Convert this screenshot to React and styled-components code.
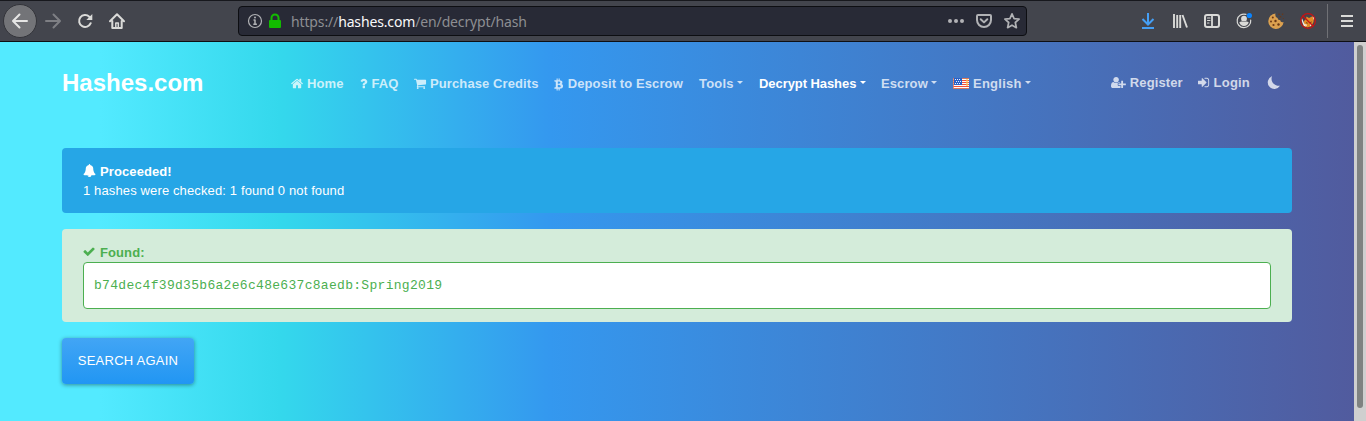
import React from "react";
import styled, { createGlobalStyle } from "styled-components";

const GlobalStyle = createGlobalStyle`
  * { box-sizing: border-box; }
  html, body { margin: 0; height: 100%; overflow: hidden; }
  body {
    font-family: "Liberation Sans", Arial, sans-serif;
    font-size: 13px;
    letter-spacing: 0.1px;
    line-height: 19.5px;
    color: #fff;
  }
`;

const Window = styled.div`
  width: 1366px;
  height: 421px;
  display: flex;
  flex-direction: column;
`;

/* Browser chrome */
const Toolbar = styled.header`
  height: 42px;
  flex: none;
  display: flex;
  align-items: center;
  background: #43454d;
  border-top: 1px solid #17181d;
  border-bottom: 1px solid #0e0f13;
`;
const BackButton = styled.span`
  width: 34px;
  height: 34px;
  margin-left: 3px;
  border-radius: 50%;
  background: #737478;
  border: 1px solid #33343a;
  display: flex;
  align-items: center;
  justify-content: center;
`;
const ToolIcon = styled.span`
  display: flex;
  width: 16px;
  height: 16px;
  margin-left: ${(p) => p.$gap || 16}px;
  color: ${(p) => p.$color || "#dadad8"};
  flex: none;
`;
const AddressBar = styled.div`
  width: 789px;
  height: 30px;
  margin-left: 113px;
  padding: 0 6px 0 9px;
  display: flex;
  align-items: center;
  background: #282a36;
  border: 1px solid #0d0e12;
  border-radius: 4px;
`;
const Url = styled.span`
  flex: 1;
  margin-left: 8px;
  padding-top: 1px;
  font: 14px/20px "Noto Sans", sans-serif;
  letter-spacing: -0.14px;
  color: #8d8e92;
  b { font-weight: 400; color: #f9f9fa; }
`;
const Separator = styled.span`
  width: 1px;
  height: 34px;
  margin-left: 11px;
  background: #707176;
`;

/* Page */
const Viewport = styled.div`
  flex: 1;
  display: flex;
`;
const Page = styled.main`
  width: 1354px;
  padding: 0 62px;
  background: linear-gradient(90deg, #53eaff 0, #53eaff 100px, #34d8ec 280px, #3498ef 550px, #515b9e 1354px);
`;
const ScrollTrack = styled.div`
  width: 12px;
  padding: 3px 3px 13px;
  background: #cfcfcf;
`;
const ScrollThumb = styled.div`
  width: 6px;
  height: 363px;
  border-radius: 3px;
  background: #7f8281;
`;
const Navbar = styled.nav`
  height: 82px;
  display: flex;
  align-items: center;
  font-weight: 700;
`;
const Brand = styled.span`
  width: 229px;
  font-size: 24px;
  line-height: 30px;
  letter-spacing: 0;
`;
const NavItem = styled.span`
  display: flex;
  align-items: center;
  gap: 4px;
  width: ${(p) => p.$w}px;
  white-space: nowrap;
  padding-top: ${(p) => (p.$raised ? 0 : 2)}px;
  letter-spacing: ${(p) => p.$ls ?? 0.1}px;
  color: ${(p) => (p.$active ? "#fff" : "rgba(255, 255, 255, 0.75)")};
`;
const Caret = styled.i`
  border: 3.5px solid transparent;
  border-top: 3.5px solid currentColor;
  border-bottom: 0;
  margin: 0 0 3px -0.5px;
`;
const GlyphSvg = styled.svg`
  flex: none;
  margin-bottom: 2px;
`;
const Alert = styled.section`
  height: ${(p) => p.$h}px;
  padding: 13px 21px;
  border-radius: 4px;
  background: ${(p) => p.$bg};
  color: ${(p) => p.$color};
`;
const AlertTitle = styled.div`
  display: flex;
  align-items: center;
  gap: 4px;
  height: 20px;
  padding-top: 1px;
  line-height: 20px;
  font-weight: 700;
`;
const Message = styled.div`
  height: 20px;
  line-height: 19px;
  letter-spacing: 0.13px;
`;
const Result = styled.div`
  height: 47px;
  padding: 0 10px;
  border: 1px solid #4caf50;
  border-radius: 4px;
  background: #fff;
  font: 13px/45px "Liberation Mono", monospace;
  letter-spacing: 0.3px;
`;
const Stack = styled.div`
  display: flex;
  flex-direction: column;
  align-items: stretch;
  gap: 16px;
  padding-top: 24px;
`;
const SearchButton = styled.button`
  align-self: flex-start;
  width: 132px;
  height: 46px;
  padding: 0 0 2px;
  border: 0;
  border-radius: 4px;
  color: #fff;
  font: 13px "Liberation Sans", Arial, sans-serif;
  letter-spacing: 0.24px;
  background: linear-gradient(#42a5f5, #2196f3);
  box-shadow: 0 1px 4px rgba(0, 0, 0, 0.4);
`;

const glyphs = {
  home: [1664, 1792, "M1472 992v480q0 26-19 45t-45 19h-384v-384h-256v384h-384q-26 0-45-19t-19-45v-480q0-1 .5-3t.5-3l575-474 575 474q1 2 1 6zm223-69l-62 74q-8 9-21 11h-3q-13 0-21-7l-692-577-692 577q-12 8-24 7-13-2-21-11l-62-74q-8-10-7-23.500t11-21.500l719-599q32-26 76-26t76 26l244 204v-195q0-14 9-23t23-9h192q14 0 23 9t9 23v408l219 182q10 8 11 21.500t-7 23.500z", 64],
  question: [1024, 1792, "M1088 1256v240q0 16-12 28t-28 12h-240q-16 0-28-12t-12-28v-240q0-16 12-28t28-12h240q16 0 28 12t12 28zm316-600q0 54-15.500 101t-35 76.500-55 59.500-57.500 43.500-61 35.500q-41 23-68.500 65t-27.500 67q0 17-12 32.500t-28 15.500h-240q-15 0-25.500-18.500t-10.500-37.500v-45q0-83 65-156.500t143-108.500q59-27 84-56t25-76q0-42-46.500-74t-107.500-32q-65 0-108 29-35 25-107 115-13 16-31 16-12 0-25-8l-164-125q-13-10-15.500-25t5.500-28q160-266 464-266 80 0 161 31t146 83 106 127.500 41 158.500z", 400],
  cart: [1664, 1792, "M704 1536q0 52-38 90t-90 38-90-38-38-90 38-90 90-38 90 38 38 90zm896 0q0 52-38 90t-90 38-90-38-38-90 38-90 90-38 90 38 38 90zm128-1088v512q0 24-16.500 42.500t-40.500 21.500l-1044 122q13 60 13 70 0 16-24 64h920q26 0 45 19t19 45-19 45-45 19h-1024q-26 0-45-19t-19-45q0-11 8-31.500t16-36 21.500-40 15.500-29.500l-177-823h-204q-26 0-45-19t-19-45 19-45 45-19h256q16 0 28.500 6.500t19.500 15.500 13 24.500 8 26 5.500 29.500 4.500 26h1201q26 0 45 19t19 45z", 64],
  bitcoin: [1344, 1792, "M1217 713q18 182-131 258 117 28 175 103t45 214q-7 71-32.500 125t-64.500 89-97 58.500-121.500 34.500-145.500 15v255h-154v-251q-80 0-122-1v252h-154v-255q-18 0-54-.5t-55-.5h-200l31-183h111q50 0 58-51v-689q-13-68-89-68h-111v-164l212 1q64 0 97-1v-252h154v247q82-2 122-2v-245h154v252q79 7 140 22.500t113 45 82.500 78 36.500 114.500zM1002 1258q0-140-230-167-90-9-187-5v338q417 10 417-166zM931 782q0-140-210-153-70-5-136-1v307q346 12 346-153z", 60],
  userPlus: [2048, 1792, "M704 896q-159 0-271.500-112.500t-112.500-271.500 112.500-271.500 271.500-112.500 271.500 112.500 112.500 271.500-112.500 271.500-271.500 112.500zm960 128h352q13 0 22.500 9.500t9.500 22.500v192q0 13-9.500 22.500t-22.500 9.500h-352v352q0 13-9.500 22.500t-22.500 9.500h-192q-13 0-22.500-9.500t-9.500-22.500v-352h-352q-13 0-22.500-9.500t-9.500-22.500v-192q0-13 9.500-22.500t22.500-9.500h352v-352q0-13 9.500-22.500t22.500-9.500h192q13 0 22.500 9.500t9.500 22.500v352zm-736 224q0 52 38 90t90 38h256v238q-68 50-171 50h-874q-121 0-194-69t-73-190q0-53 3.500-103.500t14-109 26.500-108.500 43-97.500 62-81 85.500-53.500 111.500-20q19 0 39 17 79 61 154.500 91.500t164.500 30.500 164.500-30.500 154.500-91.500q20-17 39-17 132 0 217 96h-223q-52 0-90 38t-38 90v192z", 0],
  signIn: [1600, 1792, "M1312 896q0 26-19 45l-544 544q-19 19-45 19t-45-19-19-45v-288h-448q-26 0-45-19t-19-45v-384q0-26 19-45t45-19h448v-288q0-26 19-45t45-19 45 19l544 544q19 19 19 45zm352-352v704q0 119-84.500 203.500t-203.500 84.500h-320q-13 0-22.500-9.500t-9.500-22.500q0-4-1-20t-.5-26.500 3-23.500 10-19.500 20.500-6.500h320q66 0 113-47t47-113v-704q0-66-47-113t-113-47h-312l-11.500-1-11.500-3-8-5.500-7-9-2-13.500q0-4-1-20t-.5-26.500 3-23.500 10-19.500 20.500-6.500h320q119 0 203.500 84.500t84.500 203.500z", 128],
  bell: [1792, 1792, "M912 1696q0-16-16-16-59 0-101.500-42.500t-42.500-101.500q0-16-16-16t-16 16q0 73 51.500 124.500t124.500 51.500q16 0 16-16zm816-288q0 52-38 90t-90 38h-448q0 106-75 181t-181 75-181-75-75-181h-448q-52 0-90-38t-38-90q50-42 91-88t85-119.500 74.500-158.500 50-206 19.500-260q0-152 117-282.500t307-158.500q-8-19-8-39 0-40 28-68t68-28 68 28 28 68q0 20-8 39 190 28 307 158.500t117 282.500q0 139 19.500 260t50 206 74.500 158.500 85 119.500 91 88z", 0],
  check: [1792, 1792, "M1671 566q0 40-28 68l-724 724-136 136q-28 28-68 28t-68-28l-136-136-362-362q-28-28-28-68t28-68l136-136q28-28 68-28t68 28l294 295 656-657q28-28 68-28t68 28l136 136q28 28 28 68z", 60],
};

const Glyph = ({ name }) => {
  const [w, h, d, x] = glyphs[name];
  return (
    <GlyphSvg width={(w * 13) / 1792} height="13" viewBox={`${x} 0 ${w} ${h}`} fill="currentColor" fillRule="evenodd" overflow="visible">
      <path d={d} />
    </GlyphSvg>
  );
};

const Svg = ({ children, ...rest }) => (
  <svg width="16" height="16" viewBox="0 0 16 16" fill="none" stroke="currentColor" strokeWidth="2" strokeLinecap="round" strokeLinejoin="round" overflow="visible" {...rest}>
    {children}
  </svg>
);

const Flag = () => (
  <GlyphSvg width="16" height="11" viewBox="0 0 16 11">
    <g shapeRendering="crispEdges">
      <rect width="16" height="11" fill="#fff" />
      {[0, 2, 4, 6, 8, 10].map((y) => (
        <rect key={y} y={y} width="16" height="1" fill={y === 0 || y === 10 ? "#d9785c" : "#f0503c"} />
      ))}
      <rect x="1" width="8" height="7" fill="#2a62c8" />
      <rect width="1" height="11" fill="#d9785c" opacity=".8" />
      {[[2, 1], [4, 1], [6, 1], [3, 3], [5, 3], [7, 3], [2, 5], [4, 5], [6, 5]].map(([x, y]) => (
        <rect key={`${x}-${y}`} x={x} y={y} width="1" height="1" fill="#e8f0ff" />
      ))}
      <rect x="13" y="1" width="2" height="7" fill="#ffc84a" opacity=".65" />
    </g>
  </GlyphSvg>
);

const Moon = () => (
  <GlyphSvg width="14" height="13" viewBox="0 0 14 13">
    <path d="M5 .2A6.600 6.600 0 1 0 13 9.800C7.500 10.500 3 5.500 5 .2z" fill="currentColor" />
  </GlyphSvg>
);

export default function App() {
  return (
    <Window>
      <GlobalStyle />
      <Toolbar>
        <BackButton>
          <Svg stroke="#e6e6e5"><path d="M15 8H1.500M7.500 1.500L1 8l6.500 6.500" /></Svg>
        </BackButton>
        <ToolIcon $gap={8} $color="#7e7f84"><Svg><path d="M1 8h13.500M8.500 1.500L15 8l-6.500 6.500" /></Svg></ToolIcon>
        <ToolIcon><Svg><path d="M13.700 10.200A6 6 0 1 1 12.300 3.700L14 5.500" /><path d="M15.300 1v6H9.300z" fill="currentColor" stroke="none" /></Svg></ToolIcon>
        <ToolIcon><Svg><path d="M1 8.300L8 1.300l7 7M3.300 8v7h9.400V8" /><path d="M6.800 15v-5h2.500v5" strokeWidth="1.500" /></Svg></ToolIcon>
        <AddressBar>
          <ToolIcon $gap={-1} $color="#b1b2b5">
            <Svg strokeWidth="1.200"><circle cx="8" cy="8" r="6.500" /><path d="M6.500 7H8v4.300M6.300 11.300h3.600" strokeWidth="1.500" strokeLinecap="butt" /><circle cx="8" cy="4.500" r="1" fill="currentColor" stroke="none" /></Svg>
          </ToolIcon>
          <ToolIcon $gap={4} $color="#12bc00">
            <Svg><path d="M4.500 7V5a3.500 3.500 0 0 1 7 0v2" /><rect x="2" y="7" width="12" height="8" rx="1" fill="currentColor" stroke="none" /></Svg>
          </ToolIcon>
          <Url>https://<b>hashes.com</b>/en/decrypt/hash</Url>
          <ToolIcon $color="#b1b2b5"><Svg fill="currentColor" stroke="none"><circle cx="2" cy="8" r="2" /><circle cx="8" cy="8" r="2" /><circle cx="14" cy="8" r="2" /></Svg></ToolIcon>
          <ToolIcon $gap={12} $color="#b1b2b5"><Svg><path d="M2 2h12q1 0 1 1v4a7 7 0 0 1-14 0V3q0-1 1-1z" /><path d="M4.700 6.200L8 9.400l3.300-3.200" /></Svg></ToolIcon>
          <ToolIcon $gap={12} $color="#b1b2b5"><Svg strokeWidth="1.700"><path d="M8 .9l2.100 4.700 5 .5-3.800 3.400 1.100 5.200L8 12.200l-4.400 2.500 1.100-5.200L.9 6.100l5-.5z" /></Svg></ToolIcon>
        </AddressBar>
        <ToolIcon $gap={113} $color="#459ff5"><Svg strokeLinecap="butt"><path d="M8 0v11M2.500 6L8 11.500 13.500 6M2 15h12" strokeLinejoin="miter" /></Svg></ToolIcon>
        <ToolIcon><Svg strokeLinecap="butt"><path d="M2 1v14M5.200 2v13M8.200 2v13M10.500 2l4.500 12.500" strokeWidth="1.900" /></Svg></ToolIcon>
        <ToolIcon><Svg><rect x="1" y="2" width="14" height="12" rx="2" /><path d="M8 2v12" strokeWidth="1.800" /><path d="M3.500 5h2.500M3.500 7.500h2.500M3.500 10h1.500" strokeWidth="1.100" /></Svg></ToolIcon>
        <ToolIcon>
          <Svg><path d="M10 1.400A6.800 6.800 0 1 0 14.700 7" strokeWidth="1.200" /><circle cx="8" cy="5.700" r="2.900" fill="currentColor" stroke="none" /><path d="M3.300 9.200q1.700-1 2.700-.7 2 1.200 4 0 1-.3 2.700.7-1.200 3.800-4.700 3.800t-4.700-3.800z" fill="currentColor" stroke="none" /><circle cx="13.400" cy="2.500" r="2.600" fill="#0a84ff" stroke="none" /></Svg>
        </ToolIcon>
        <ToolIcon>
          <Svg stroke="none"><path d="M7.500.5A7.700 7.700 0 1 0 15.600 9q-3 .8-3.500-2-2.500.5-2.500-2-3-.8-2.100-4.500z" fill="#dba04f" /><g fill="#6b3816"><circle cx="4.800" cy="4.500" r="1" /><circle cx="3" cy="8.500" r="1" /><circle cx="7.500" cy="8" r="1.200" /><circle cx="5.500" cy="12" r="1.100" /><circle cx="10.500" cy="11.500" r="1.200" /><circle cx="11" cy="1.200" r=".8" /><circle cx="14.600" cy="1.300" r=".8" /><circle cx="12.500" cy="3.800" r=".8" /><circle cx="15.300" cy="5.500" r=".6" /></g></Svg>
        </ToolIcon>
        <ToolIcon>
          <Svg strokeWidth="1.300">
            <path d="M4 8l2-2 .5-2.500L9 5l3-1.500 2 .5-.5 5-2 4-4 1.500-4-1.500z" fill="#e58b24" stroke="none" />
            <path d="M1.500 4q-.5 3 1 6l1.500 3 2 .5-2-3.500zM12.500 3.500l2 .5-.5 3z" fill="#f5eee4" stroke="none" />
            <path d="M5 11l2 .8-1 1.700zM10 11.500l2-.5-1.500 2.500z" fill="#fff" stroke="none" />
            <path d="M6.300 9.800l1 .3M10.300 9.500l1-.4" stroke="#65401f" strokeWidth="1" />
            <circle cx="8" cy="8" r="7.300" stroke="#c71214" /><path d="M3 3l10 10" stroke="#c71214" />
          </Svg>
        </ToolIcon>
        <Separator />
        <ToolIcon $gap={11}><Svg strokeLinecap="butt"><path d="M2 3h12M2 8h12M2 13h12" /></Svg></ToolIcon>
      </Toolbar>
      <Viewport>
        <Page>
          <Navbar>
            <Brand>Hashes.com</Brand>
            <NavItem $w={69}><Glyph name="home" />Home</NavItem>
            <NavItem $w={54}><Glyph name="question" />FAQ</NavItem>
            <NavItem $w={140}><Glyph name="cart" />Purchase Credits</NavItem>
            <NavItem $w={145} $ls={0.1}><Glyph name="bitcoin" />Deposit to Escrow</NavItem>
            <NavItem $w={60} $ls={0.2}>Tools<Caret /></NavItem>
            <NavItem $w={122} $ls={-0.07} $active>Decrypt Hashes<Caret /></NavItem>
            <NavItem $w={72}>Escrow<Caret /></NavItem>
            <NavItem $w={158} $ls={0.25}><Flag />English<Caret /></NavItem>
            <NavItem $w={87} $raised><Glyph name="userPlus" />Register</NavItem>
            <NavItem $w={69} $ls={0.2} $raised><Glyph name="signIn" />Login</NavItem>
            <NavItem $w={16} $raised><Moon /></NavItem>
          </Navbar>
          <Stack>
            <Alert $h={65} $bg="#26a6e6" $color="#fff">
              <AlertTitle><Glyph name="bell" />Proceeded!</AlertTitle>
              <Message>1 hashes were checked: 1 found 0 not found</Message>
            </Alert>
            <Alert $h={93} $bg="#d4ecda" $color="#4caf50">
              <AlertTitle><Glyph name="check" />Found:</AlertTitle>
              <Result>b74dec4f39d35b6a2e6c48e637c8aedb:Spring2019</Result>
            </Alert>
            <SearchButton>SEARCH AGAIN</SearchButton>
          </Stack>
        </Page>
        <ScrollTrack><ScrollThumb /></ScrollTrack>
      </Viewport>
    </Window>
  );
}
